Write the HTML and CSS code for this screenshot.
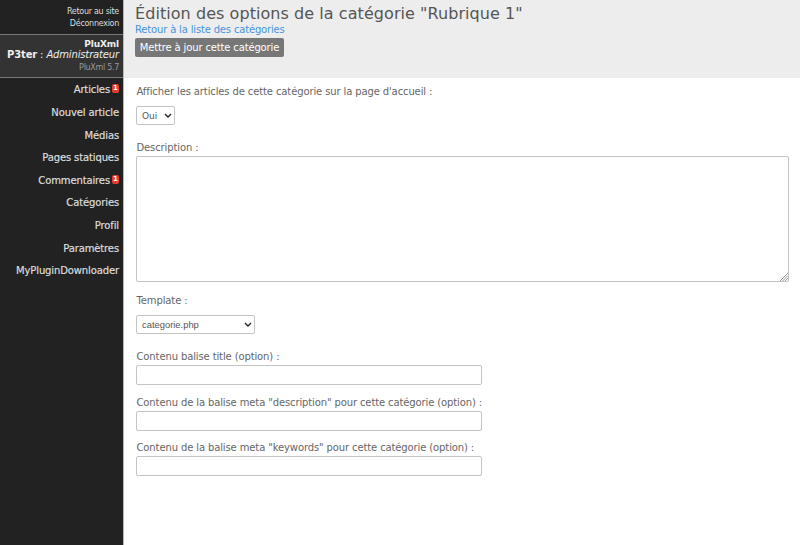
FILE: index.html
```html
<!DOCTYPE html>
<html lang="fr">
<head>
<meta charset="utf-8">
<title>PluXml - Catégorie</title>
<link rel="stylesheet" href="styles.css">
</head>
<body>
<aside class="sidebar">
  <div class="top-links"><a>Retour au site</a><a>Déconnexion</a></div>
  <div class="profile">
    <strong class="site">PluXml</strong>
    <span class="user"><strong>P3ter</strong> : <em>Administrateur</em></span>
    <span class="version">PluXml 5.7</span>
  </div>
  <nav class="menu">
    <a>Articles<span class="badge">1</span></a>
    <a>Nouvel article</a>
    <a>Médias</a>
    <a>Pages statiques</a>
    <a>Commentaires<span class="badge">1</span></a>
    <a>Catégories</a>
    <a>Profil</a>
    <a>Paramètres</a>
    <a>MyPluginDownloader</a>
  </nav>
</aside>
<main class="content">
  <header class="action-bar">
    <h1>Édition des options de la catégorie "Rubrique 1"</h1>
    <a class="back">Retour à la liste des catégories</a>
    <button class="submit">Mettre à jour cette catégorie</button>
  </header>
  <form class="form">
    <label class="l-home">Afficher les articles de cette catégorie sur la page d'accueil :</label>
    <div class="select small"><span>Oui</span><svg viewBox="0 0 8 6"><path d="M1 1l3 3 3-3"/></svg></div>
    <label class="l-desc">Description :</label>
    <div class="area"><svg viewBox="0 0 8 8"><path d="M0 8l8-8M2.5 8L8 2.5M5 8l3-3"/></svg></div>
    <label class="l-tpl">Template :</label>
    <div class="select wide"><span>categorie.php</span><svg viewBox="0 0 8 6"><path d="M1 1l3 3 3-3"/></svg></div>
    <label class="l-title">Contenu balise title (option) :</label>
    <input type="text">
    <label class="l-meta">Contenu de la balise meta "description" pour cette catégorie (option) :</label>
    <input type="text">
    <label class="l-key">Contenu de la balise meta "keywords" pour cette catégorie (option) :</label>
    <input type="text">
  </form>
</main>
</body>
</html>
```
FILE: styles.css
```css
* { box-sizing: border-box; }
body { margin: 0; height: 545px; display: flex; overflow: hidden; background: #fff; color: #666; font-family: "DejaVu Sans", sans-serif; font-size: 10px; letter-spacing: -.12px; }
.sidebar { width: 124px; height: 545px; flex: none; background: #222; border-right: 1px solid #b8b8b8; color: #ddd; text-align: right; }
.top-links { height: 34px; padding: 6px 4px 0 0; font-size: 8px; line-height: 12.2px; letter-spacing: -.28px; }
.top-links a { display: block; }
.profile { height: 44px; padding: 3px 4px 0 0; background: #333; border-top: 1px solid #777; border-bottom: 1px solid #777; }
.profile > * { display: block; }
.site { font-size: 9px; line-height: 12px; color: #eee; }
.user { font-size: 10px; line-height: 10px; color: #eee; letter-spacing: -.15px; white-space: nowrap; }
.version { font-size: 8px; line-height: 16px; color: #999; letter-spacing: -.3px; }
.menu { padding: .4px 4px 0 0; }
.menu a { display: block; height: 22.6px; line-height: 24px; white-space: nowrap; -webkit-text-stroke: .2px #ddd; }
.badge { display: inline-block; width: 7px; height: 9px; margin-left: 2px; border-radius: 2px; background: #e43d2b; color: #fff; font-size: 7px; font-weight: bold; line-height: 9px; letter-spacing: 0; text-align: center; vertical-align: 3px; -webkit-text-stroke: 0; }
.content { flex: 1; }
.action-bar { height: 78px; padding: 3px 0 0 11px; background: #ededed; }
h1 { margin: 0; font-size: 16px; font-weight: normal; line-height: 21px; letter-spacing: .06px; color: #555; }
.back { display: block; height: 14px; line-height: 12px; letter-spacing: -.17px; color: #4595dc; }
.submit { display: block; width: 149px; height: 19px; padding: 0 0 1px; border: 0; border-radius: 2px; background: #777; color: #fff; font: 10px "DejaVu Sans", sans-serif; letter-spacing: -.15px; white-space: nowrap; }
.form { padding: 0 11px 0 12px; }
label { display: block; height: 14px; padding-left: .5px; line-height: 15px; white-space: nowrap; }
.l-home { margin-top: 6px; }
.select { display: flex; align-items: center; justify-content: space-between; height: 19px; padding: 0 2px 0 5px; border: 1px solid #c4c4c4; border-radius: 2px; font: 9.4px "Liberation Sans", sans-serif; letter-spacing: 0; color: #555; }
.select svg { width: 8px; height: 6px; fill: none; stroke: #222; stroke-width: 1.4; }
.small { width: 39px; margin-top: 8px; font-family: "DejaVu Sans", sans-serif; font-size: 9px; }
.wide { width: 119px; margin-top: 8px; }
.l-desc { margin-top: 15px; }
.area { display: flex; align-items: flex-end; justify-content: flex-end; height: 126px; margin-top: 2px; border: 1px solid #c4c4c4; border-radius: 2px; }
.area svg { width: 8px; height: 8px; fill: none; stroke: #999; stroke-width: 1; }
.l-tpl { margin-top: 11px; }
.l-title { margin-top: 15px; }
input { display: block; width: 346px; height: 20px; margin: 2px 0 0; border: 1px solid #c4c4c4; border-radius: 2px; background: #fff; }
.l-meta { margin-top: 10px; }
.l-key { margin-top: 9px; }
```
